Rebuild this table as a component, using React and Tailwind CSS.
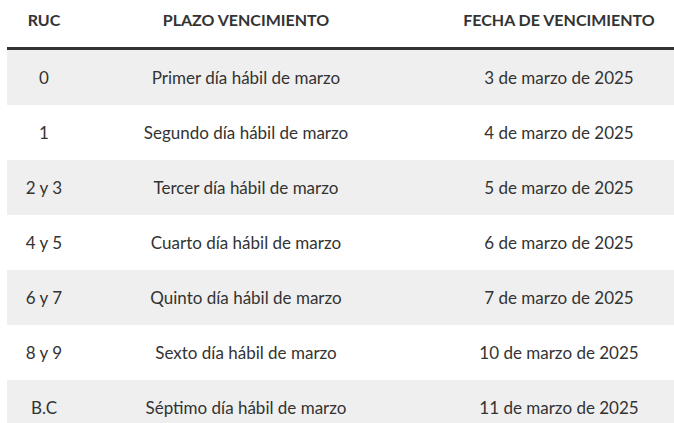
const rows = [
  ["0", "Primer día hábil de marzo", "3 de marzo de 2025"],
  ["1", "Segundo día hábil de marzo", "4 de marzo de 2025"],
  ["2 y 3", "Tercer día hábil de marzo", "5 de marzo de 2025"],
  ["4 y 5", "Cuarto día hábil de marzo", "6 de marzo de 2025"],
  ["6 y 7", "Quinto día hábil de marzo", "7 de marzo de 2025"],
  ["8 y 9", "Sexto día hábil de marzo", "10 de marzo de 2025"],
  ["B.C", "Séptimo día hábil de marzo", "11 de marzo de 2025"],
];

export default function App() {
  return (
    <div className="h-[423px] w-[674px] overflow-hidden bg-white font-['Lato',sans-serif] text-[#333]">
      <div className="ml-[7px] w-[700px]">
        <div className="grid h-[50px] grid-cols-[74px_330px_296px] items-center border-b-[3px] border-[#333] pb-[8px] text-[16px] font-bold">
          <div className="text-center">RUC</div>
          <div className="text-center">PLAZO VENCIMIENTO</div>
          <div className="text-center">FECHA DE VENCIMIENTO</div>
        </div>
        {rows.map((r, i) => (
          <div
            key={i}
            className={`grid h-[55px] grid-cols-[74px_330px_296px] items-center text-[17px] ${i % 2 === 0 ? "bg-[#efefef]" : "bg-white"}`}
          >
            <div className="text-center">{r[0]}</div>
            <div className="text-center">{r[1]}</div>
            <div className="text-center">{r[2]}</div>
          </div>
        ))}
      </div>
    </div>
  );
}
